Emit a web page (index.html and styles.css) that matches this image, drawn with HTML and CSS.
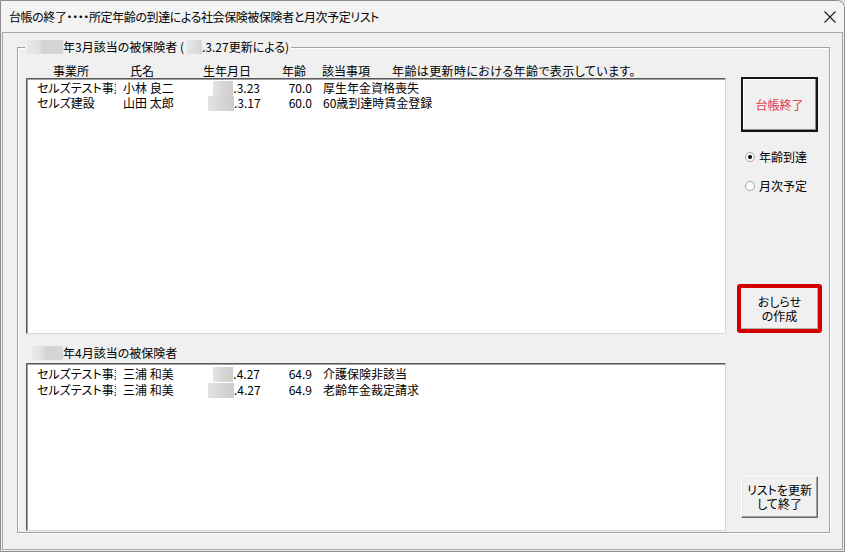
FILE: index.html
```html
<!DOCTYPE html>
<html lang="ja">
<head>
  <meta charset="UTF-8">
  <title>台帳の終了</title>
  <link rel="stylesheet" href="styles.css">
</head>
<body>
  <div class="window">
    <div class="titlebar">
      <span class="title">台帳の終了・・・・所定年齢の到達による社会保険被保険者と月次予定リスト</span>
      <svg class="close" width="12" height="12" viewBox="0 0 12 12">
        <path d="M0.5 0.5 L11.5 11.5 M11.5 0.5 L0.5 11.5" stroke="#1e1e1e" stroke-width="1.1" fill="none"/>
      </svg>
    </div>
    <div class="client">
      <fieldset class="group">
        <legend><span class="blur blur-year"></span>年3月該当の被保険者 (<span class="blur blur-small"></span>.3.27更新による)</legend>
        <div class="layout">
          <div class="lists">
            <div class="head">
              <span class="h-office">事業所</span>
              <span class="h-name">氏名</span>
              <span class="h-birth">生年月日</span>
              <span class="h-age">年齢</span>
              <span class="h-item">該当事項</span>
              <span class="h-note">年齢は更新時における年齢で表示しています。</span>
            </div>
            <div class="listbox list-march">
              <div class="row">
                <span class="c-office"><span class="clip">セルズテスト事業所</span></span>
                <span class="c-name">小林 良二</span>
                <span class="c-birth"><span class="blur blur-date"></span>.3.23</span>
                <span class="c-age">70.0</span>
                <span class="c-item">厚生年金資格喪失</span>
              </div>
              <div class="row">
                <span class="c-office"><span class="clip">セルズ建設</span></span>
                <span class="c-name">山田 太郎</span>
                <span class="c-birth"><span class="blur blur-date wide"></span>.3.17</span>
                <span class="c-age">60.0</span>
                <span class="c-item">60歳到達時賃金登録</span>
              </div>
            </div>
            <div class="sublabel"><span class="blur blur-year2"></span>年4月該当の被保険者</div>
            <div class="listbox list-april">
              <div class="row">
                <span class="c-office"><span class="clip">セルズテスト事業所</span></span>
                <span class="c-name">三浦 和美</span>
                <span class="c-birth"><span class="blur blur-date"></span>.4.27</span>
                <span class="c-age">64.9</span>
                <span class="c-item">介護保険非該当</span>
              </div>
              <div class="row">
                <span class="c-office"><span class="clip">セルズテスト事業所</span></span>
                <span class="c-name">三浦 和美</span>
                <span class="c-birth"><span class="blur blur-date wide"></span>.4.27</span>
                <span class="c-age">64.9</span>
                <span class="c-item">老齢年金裁定請求</span>
              </div>
            </div>
          </div>
          <div class="side">
            <button class="btn btn-default">台帳終了</button>
            <label class="radio"><span class="dot checked"></span>年齢到達</label>
            <label class="radio"><span class="dot"></span>月次予定</label>
            <button class="btn btn-notice">おしらせ<br>の作成</button>
            <button class="btn btn-refresh">リストを更新<br>して終了</button>
          </div>
        </div>
      </fieldset>
    </div>
  </div>
</body>
</html>
```

FILE: styles.css
```css
* {
  box-sizing: border-box;
}
body {
  margin: 0;
  background: #dcdcdc;
  font-family: "Noto Sans CJK JP", "Noto Sans", sans-serif;
  font-size: 12px;
  font-feature-settings: "palt";
  color: #000;
}
.window {
  width: 845px;
  height: 552px;
  background: #f0f0f0;
  border: 1px solid #8c8c8c;
  border-radius: 0 8px 0 0;
  overflow: hidden;
}
.titlebar {
  height: 31px;
  display: flex;
  align-items: center;
  justify-content: space-between;
  padding: 0 9px 0 8px;
  background: #f3f3f3;
}
.title {
  line-height: 14px;
  letter-spacing: -0.4px;
}
.close {
  display: block;
  margin-right: -1px;
}
.client {
  margin: 0 1px;
  height: 518px;
  border: 1px solid #a6a6a6;
  padding: 7px 12px 0 14px;
  background: #f0f0f0;
}
.group {
  margin: 0;
  padding: 10px 2px 1px 8px;
  border: 1px solid #a0a0a0;
  box-shadow: inset 1px 1px 0 #fff, 1px 1px 0 #fff;
}
legend {
  padding: 0 2px;
  margin-left: -1px;
  line-height: 14px;
  background: #f0f0f0;
  display: flex;
  align-items: center;
}
.blur {
  display: inline-block;
  height: 14px;
  background: linear-gradient(90deg, #e9e9e9 0%, #e2e2e2 30%, #d3d3d3 45%, #d6d6d6 100%);
}
.blur-year {
  width: 36px;
}
.blur-small {
  width: 15px;
  margin-left: 3px;
  background: linear-gradient(90deg, #e6e6e6, #d4d4d4);
}
.blur-year2 {
  width: 31px;
}
.blur-date {
  width: 20px;
  height: 15px;
  vertical-align: -3px;
  background: linear-gradient(90deg, #e4e4e4 0%, #d6d6d6 50%, #cdcdcd 100%);
}
.blur-date.wide {
  width: 26px;
}
.layout {
  display: flex;
  gap: 11px;
}
.lists {
  width: 700px;
  display: flex;
  flex-direction: column;
}
.head {
  display: flex;
  line-height: 14px;
  padding-left: 27px;
  white-space: nowrap;
}
.h-office { width: 77px; }
.h-name { width: 73px; }
.h-birth { width: 79px; }
.h-age { width: 40px; }
.h-item { width: 70px; }
.h-note { letter-spacing: 0.4px; }
.listbox {
  background: #fff;
  border: 1px solid;
  border-color: #5a5a5a #d8d8d8 #d8d8d8 #5a5a5a;
  box-shadow: inset 1px 1px 0 #a0a0a0;
  padding: 2px 0 0 10px;
}
.list-march {
  height: 256px;
  line-height: 14px;
}
.list-april {
  height: 168px;
  line-height: 16px;
}
.row {
  display: flex;
  white-space: nowrap;
}
.c-office {
  width: 79px;
  margin-right: 7px;
  overflow: hidden;
}
.clip {
  display: block;
}
.c-name {
  width: 85px;
}
.c-birth {
  width: 52px;
  text-align: right;
}
.c-age {
  width: 52px;
  text-align: right;
}
.c-item {
  margin-left: 11px;
}
.sublabel {
  margin: 12px 0 3px 6px;
  line-height: 14px;
  display: flex;
  align-items: center;
}
.side {
  width: 90px;
  display: flex;
  flex-direction: column;
  align-items: flex-start;
}
.btn {
  font: inherit;
  font-feature-settings: "palt";
  line-height: 14px;
  color: #000;
  background: #f0f0f0;
  border: 1px solid;
  border-color: #fff #696969 #696969 #fff;
  box-shadow: inset -1px -1px 0 #a0a0a0, inset 1px 1px 0 #e3e3e3;
  padding: 0;
  cursor: pointer;
}
.btn-default {
  margin: 13px 0 0 4px;
  width: 77px;
  height: 55px;
  color: #e2383a;
  border: 2px solid #141414;
  box-shadow: inset -1px -1px 0 #8a8a8a, inset 1px 1px 0 #fff;
}
.radio {
  display: flex;
  align-items: center;
  gap: 4px;
  margin-left: 8px;
  line-height: 14px;
}
.radio:first-of-type {
  margin-top: 18px;
}
.radio + .radio {
  margin-top: 15px;
}
.dot {
  width: 10px;
  height: 10px;
  border-radius: 50%;
  border: 1px solid #a3a3a3;
  background: #fff;
  display: flex;
  align-items: center;
  justify-content: center;
}
.dot.checked::after {
  content: "";
  width: 4px;
  height: 4px;
  border-radius: 50%;
  background: #000;
}
.btn-notice {
  margin-top: 91px;
  width: 85px;
  height: 49px;
  border: 4px solid #d40000;
  border-radius: 3px;
  box-shadow: inset -1px -1px 0 #b0b0b0;
}
.btn-refresh {
  margin: auto 0 13px 4px;
  width: 77px;
  height: 42px;
}
```
